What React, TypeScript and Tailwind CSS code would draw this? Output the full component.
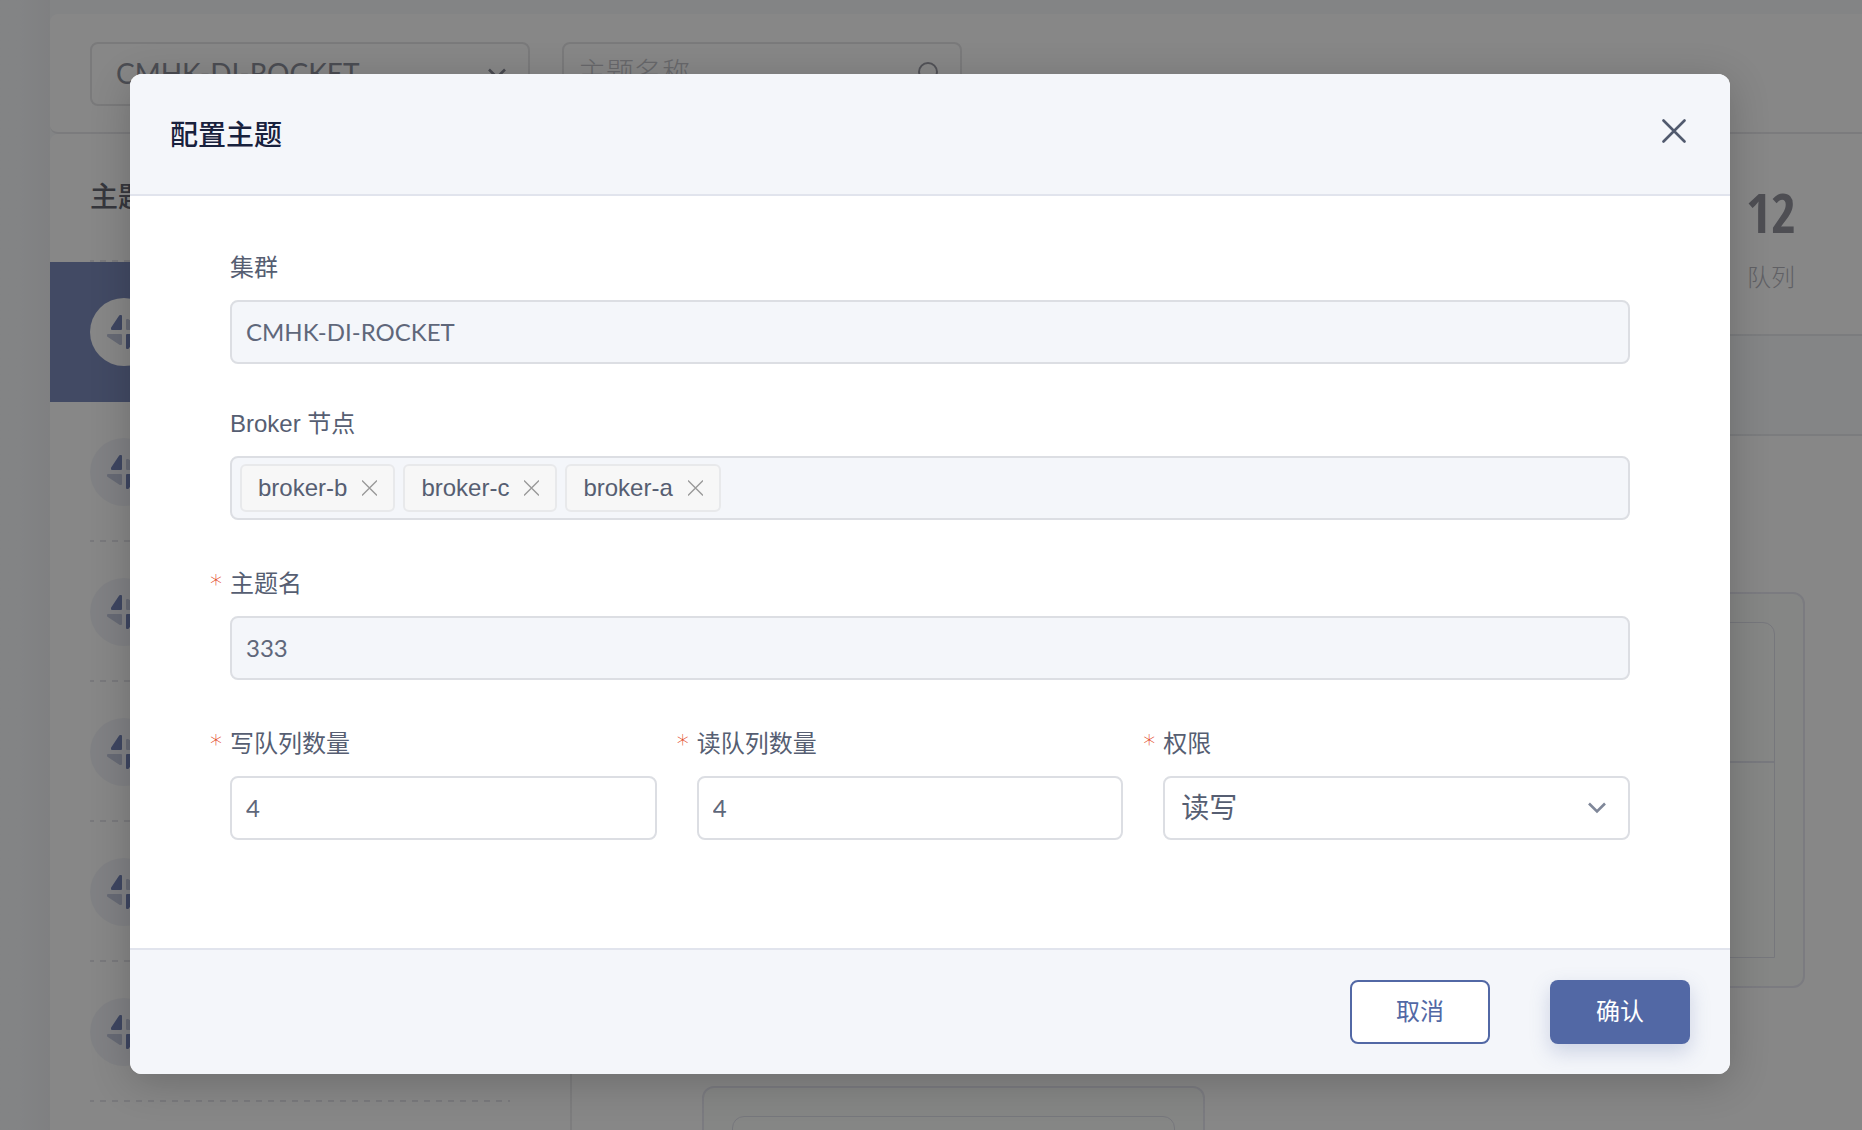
import { useState } from 'react'
import type { ReactNode } from 'react'

interface FieldProps {
  label: string
  htmlFor: string
  required?: boolean
  children: ReactNode
}

const TOPICS = [0, 1, 2, 3, 4, 5]

const inputBase =
  'h-16 w-full rounded-lg border-2 border-[#dcdee3] px-3.5 pb-0.5 font-[Lato,"Noto_Sans_CJK_SC",sans-serif] text-2xl text-[#5f677a] outline-none'

const dashedLine =
  'h-0.5 bg-[repeating-linear-gradient(90deg,#e4e5ea_0_4px,transparent_4px_10px,#e4e5ea_10px_12px)]'

export default function App() {
  return (
    <div className='relative h-screen overflow-hidden bg-[#f7f9fc] font-["Liberation_Sans","Noto_Sans_CJK_SC",sans-serif] text-2xl text-[#565e72]'>
      <Console />
      <div className="absolute inset-0 bg-black/47" />
      <div className="absolute inset-0 flex items-start pt-[74px] pr-[132px] pl-[130px]">
        <ConfigDialog />
      </div>
    </div>
  )
}

/* Page behind the dialog */
function Console() {
  return (
    <div className="flex h-full" aria-hidden="true">
      <div className="w-[50px] shrink-0 bg-linear-to-r from-[#f7f9fc] from-40% to-[#f0f1f4]" />
      <div className="flex min-w-0 flex-1 flex-col pt-3.5">
        <div className="flex h-[120px] shrink-0 gap-8 rounded-l-lg border-b-2 border-[#e8e9ec] bg-white px-10 pt-7">
          <div className="relative h-16 w-[440px]">
            <select
              tabIndex={-1}
              aria-label="集群"
              className="h-16 w-full appearance-none rounded-lg border-2 border-[#e6e6e8] bg-white pl-6 font-[Lato] text-[28px] text-[#8f929d]"
            >
              <option>CMHK-DI-ROCKET</option>
            </select>
            <Chevron className="absolute top-6 right-6 text-[#8a8d98]" />
          </div>
          <div className="flex h-16 w-[400px] items-center rounded-lg border-2 border-[#e6e6e8] pr-5 pl-3.5">
            <input
              tabIndex={-1}
              aria-label="主题名称"
              placeholder="主题名称"
              className="min-w-0 flex-1 bg-transparent text-[28px] font-light outline-none placeholder:text-[#c4c5cb]"
            />
            <svg width="24" height="24" viewBox="0 0 24 24" fill="none" stroke="#9b9ca6" strokeWidth="2">
              <circle cx="12" cy="10" r="9" />
              <path d="M18.5 16.5 23 21" />
            </svg>
          </div>
        </div>

        <div className="flex min-h-0 flex-1">
          {/* Topic list */}
          <div className="w-[522px] shrink-0 rounded-tl-lg border-r-2 border-[#ececef] bg-white">
            <div className="mr-[60px] ml-10 flex h-32 flex-col justify-between pt-11">
              <h2 className="text-[28px] leading-10 font-medium text-[#666874]">主题</h2>
              <div className={dashedLine} />
            </div>
            {TOPICS.map((i) => (
              <TopicItem key={i} active={i === 0} />
            ))}
          </div>

          {/* Topic detail */}
          <div className="min-w-0 flex-1 bg-white">
            <div className="flex h-[202px] justify-end border-b-2 border-[#e9eaee] pt-12 pr-[66px]">
              <div className="text-center">
                <div className='font-["Open_Sans_Condensed","Roboto_Condensed","DejaVu_Sans_Condensed",Roboto,sans-serif] text-[54px] leading-15 font-medium text-[#93949e]'>
                  12
                </div>
                <div className="mt-4.5 leading-9 font-light text-[#b5b6be]">队列</div>
              </div>
            </div>
            <div className="h-[100px] border-b-2 border-[#e9eaee] bg-[#fafbfe]" />
            <div className="grid grid-cols-2 gap-x-[98px] gap-y-[98px] pt-[156px] pr-[57px] pl-[130px]">
              <QueueCard />
              <QueueCard />
              <QueueCard />
            </div>
          </div>
        </div>
      </div>
    </div>
  )
}

function TopicItem({ active }: { active: boolean }) {
  return (
    <div className={`flex h-[140px] flex-col pr-[60px] pl-10 ${active ? '-mr-0.5 bg-[#7e8dbd]' : 'pt-0.5'}`}>
      <div className="flex flex-1 items-center">
        <span className={`flex size-[68px] items-center justify-center rounded-full ${active ? 'bg-white' : 'bg-[#f2f4f9]'}`}>
          <svg width="36" height="36" viewBox="0 0 36 36" strokeWidth="2" strokeLinejoin="round">
            <path d="M15 2h-1L6 14v1h9z" fill="#7584b8" stroke="#7584b8" />
            <path d="M15 21v9h-1L2 22v-1z" fill="#c2c8dd" stroke="#c2c8dd" />
            <path d="M21 15V6h1l12 8v1z" fill="#c2c8dd" stroke="#c2c8dd" />
            <path d="M21 21h9v1l-8 12h-1z" fill="#7584b8" stroke="#7584b8" />
          </svg>
        </span>
      </div>
      {!active && <div className={dashedLine} />}
    </div>
  )
}

function QueueCard() {
  return (
    <div className="h-[396px] rounded-xl border-2 border-[#e8e9f1] bg-[#fbfdfb] p-7">
      <div className="h-full rounded-t-xl border border-[#dfe0eb]">
        <div className="h-[140px] border-b-2 border-[#e2e4ee]" />
      </div>
    </div>
  )
}

function ConfigDialog() {
  const [brokers, setBrokers] = useState(['broker-b', 'broker-c', 'broker-a'])
  const [writeCount, setWriteCount] = useState('4')
  const [readCount, setReadCount] = useState('4')

  return (
    <div
      role="dialog"
      aria-labelledby="dialog-title"
      className="w-full overflow-hidden rounded-xl bg-white shadow-[0_8px_40px_rgba(0,0,0,0.2)]"
    >
      {/* Header */}
      <div className="flex h-[122px] items-center justify-between border-b-2 border-[#e1e4ed] bg-[#f4f6fa] px-10">
        <h1 id="dialog-title" className="pt-1 text-[28px] font-medium text-[#18213d]">配置主题</h1>
        <button aria-label="关闭" className="mb-1.5 flex size-8 items-center justify-center">
          <svg width="24" height="24" viewBox="0 0 24 24" stroke="#515a6e" strokeWidth="2.6" strokeLinecap="round">
            <path d="m1.5 1.5 21 21M22.5 1.5l-21 21" />
          </svg>
        </button>
      </div>

      {/* Form */}
      <form className="px-[100px] pt-14 pb-27">
        <Field label="集群" htmlFor="cluster">
          <input id="cluster" readOnly value="CMHK-DI-ROCKET" className={`${inputBase} bg-[#f4f6fa]`} />
        </Field>
        <div className="mt-11">
          <Field label="Broker 节点" htmlFor="brokers">
            <div id="brokers" className="flex h-16 items-center gap-2 rounded-lg border-2 border-[#dcdee3] bg-[#f4f6fa] px-2">
              {brokers.map((b) => (
                <span
                  key={b}
                  className="flex h-12 items-center gap-[15px] rounded-md border-2 border-[#e8e9eb] bg-[#f7f7f7] px-4"
                >
                  {b}
                  <button type="button" aria-label={`移除 ${b}`} onClick={() => setBrokers(brokers.filter((x) => x !== b))}>
                    <svg width="15" height="16" viewBox="0 0 15 16" stroke="#999" strokeWidth="1.3">
                      <path d="m0 .5 15 15M15 .5 0 15.5" />
                    </svg>
                  </button>
                </span>
              ))}
            </div>
          </Field>
        </div>
        <div className="mt-12">
          <Field label="主题名" htmlFor="topic" required>
            <input id="topic" readOnly value="333" className={`${inputBase} bg-[#f4f6fa]`} />
          </Field>
        </div>
        <div className="mt-12 grid grid-cols-3">
          <div className="pr-10">
            <Field label="写队列数量" htmlFor="write" required>
              <input id="write" value={writeCount} onChange={(e) => setWriteCount(e.target.value)} className={inputBase} />
            </Field>
          </div>
          <div className="pr-10">
            <Field label="读队列数量" htmlFor="read" required>
              <input id="read" value={readCount} onChange={(e) => setReadCount(e.target.value)} className={inputBase} />
            </Field>
          </div>
          <Field label="权限" htmlFor="perm" required>
            <div className="relative">
              <select
                id="perm"
                className="h-16 w-full appearance-none rounded-lg border-2 border-[#dcdee3] bg-white pt-0.5 pl-4 text-[28px] outline-none"
              >
                <option>读写</option>
                <option>只读</option>
                <option>只写</option>
              </select>
              <Chevron className="pointer-events-none absolute top-6 right-6 text-[#7f8799]" />
            </div>
          </Field>
        </div>
      </form>

      {/* Footer */}
      <div className="flex h-[126px] items-center justify-end gap-15 border-t-2 border-[#e1e4ed] bg-[#f4f6fa] px-10">
        <button className="h-16 w-[140px] rounded-lg border-2 border-[#5268a5] bg-white text-[#5268a5]">取消</button>
        <button className="h-16 w-[140px] rounded-lg bg-[#5268a5] text-white shadow-[0_8px_20px_rgba(82,104,165,0.25)]">确认</button>
      </div>
    </div>
  )
}

function Field({ label, htmlFor, required, children }: FieldProps) {
  return (
    <div>
      <label htmlFor={htmlFor} className="mb-4 flex h-8 items-center">
        {required && <span className='-ml-5 w-5 font-["DejaVu_Sans"] font-extralight text-[#e23d14]'>*</span>}
        {label}
      </label>
      {children}
    </div>
  )
}

function Chevron({ className }: { className: string }) {
  return (
    <svg width="18" height="16" viewBox="0 0 18 16" fill="none" stroke="currentColor" strokeWidth="2.6" className={className}>
      <path d="m1 3.5 8 8 8-8" />
    </svg>
  )
}
